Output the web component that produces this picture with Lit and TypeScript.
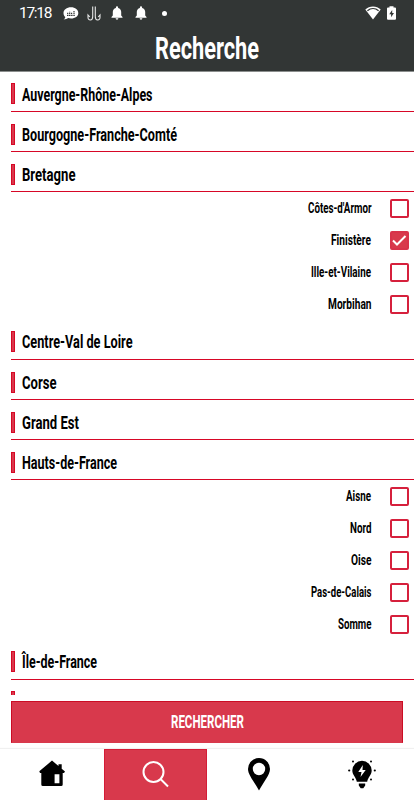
import { LitElement, html, svg, css } from "lit";
import { customElement, property } from "lit/decorators.js";

/** A single line of condensed lettering, fitted to a given width. */
@customElement("condensed-text")
class CondensedText extends LitElement {
  @property() text = "";
  @property({ type: Number }) width = 100;
  @property({ type: Number }) size = 17;
  static styles = css`
    :host { display: block; flex: none; }
    svg { display: block; overflow: visible; }
    text { font-family: Roboto, "Liberation Sans", sans-serif; font-weight: 700; fill: currentColor; }
  `;
  render() {
    const h = Math.round(this.size * 1.25);
    return html`<svg width=${this.width} height=${h}>
      <text x="0" y=${this.size} font-size=${this.size} textLength=${this.width} lengthAdjust="spacingAndGlyphs">${this.text}</text>
    </svg>`;
  }
}

type Dept = { name: string; w: number; checked?: boolean };
type Region = { name?: string; w: number; depts?: Dept[] };

const regions: Region[] = [
  { name: "Auvergne-Rhône-Alpes", w: 130.5 },
  { name: "Bourgogne-Franche-Comté", w: 155 },
  {
    name: "Bretagne", w: 53.5,
    depts: [
      { name: "Côtes-d'Armor", w: 63.5 },
      { name: "Finistère", w: 40, checked: true },
      { name: "Ille-et-Vilaine", w: 60 },
      { name: "Morbihan", w: 43.5 },
    ],
  },
  { name: "Centre-Val de Loire", w: 110.5 },
  { name: "Corse", w: 34.5 },
  { name: "Grand Est", w: 57 },
  {
    name: "Hauts-de-France", w: 95,
    depts: [
      { name: "Aisne", w: 25 },
      { name: "Nord", w: 21.5 },
      { name: "Oise", w: 20.5 },
      { name: "Pas-de-Calais", w: 60.5 },
      { name: "Somme", w: 33.5 },
    ],
  },
  { name: "Île-de-France", w: 75 },
  { w: 0 },
];

const bell = svg`<path d="M6 0.3a1.1 1.1 0 0 1 1.1 1.1v.5c2 .5 3.1 2.1 3.1 4.1v3.6l1.3 1.3v.8H.5v-.8l1.3-1.3V6c0-2 1.100-3.600 3.100-4.100v-.5A1.100 1.100 0 0 1 6 .3zM4.600 12.300h2.800a1.400 1.400 0 0 1-2.800 0z" fill="#fff"/>`;

@customElement("app-root")
class AppRoot extends LitElement {
  static styles = css`
    :host { display: flex; flex-direction: column; width: 414px; height: 800px; overflow: hidden; background: #fff; color: #000; }
    svg { display: block; flex: none; }
    header { flex: none; height: 70.5px; background: #323635; color: #fff; border-bottom: 1px solid #8b8e8d; }
    .status { display: flex; align-items: center; height: 26px; padding: 0 18px 0 19px; }
    .clock { font: 400 15.5px/27px Roboto, sans-serif; width: 44px; letter-spacing: -1.3px; white-space: nowrap; flex: none; }
    .hook { margin-left: 8px; }
    .bell-a { margin-left: 10px; }
    .bell-b { margin-left: 12px; }
    .battery { margin-left: 6px; }
    .dot { width: 5px; height: 5px; border-radius: 50%; background: #fff; margin-left: 15px; }
    .spacer { flex: 1; }
    .title { display: flex; justify-content: center; padding-top: 2px; }
    main { flex: none; height: 623.5px; overflow: hidden; }
    .region { display: flex; box-sizing: border-box; height: 39.2px; margin-left: 11px; padding-top: 11.9px; }
    .rule { height: 1px; margin-left: 11px; background: #d70726; }
    .bar { box-sizing: border-box; width: 4px; height: 21px; background: #d8394c; border: 1px solid #d70726; margin-right: 6.5px; flex: none; }
    .region condensed-text { margin-top: -0.9px; }
    .dept { box-sizing: border-box; display: flex; justify-content: flex-end; align-items: center; height: 31.85px; padding: 1.5px 5px 0 0; }
    .dept condensed-text { margin: -1px 19px 0 0; }
    .box { box-sizing: border-box; width: 19px; height: 19px; border: 2px solid #d6203c; border-radius: 2px; flex: none; }
    .box.on { background: #d8394c; border-color: #d8324a; }
    .action { flex: none; margin: 6px 11px 6px; height: 42px; box-sizing: border-box; display: flex; justify-content: center; align-items: center; background: #d8394c; border: 1px solid #cb0c24; border-bottom-color: #d8394c; color: #fff; }
    .action condensed-text { margin-top: -3px; }
    nav { flex: 1; display: grid; grid-template-columns: repeat(4, 1fr); box-shadow: 0 -1px 1px #f0f0f0; }
    .tab { display: flex; justify-content: center; align-items: flex-start; box-sizing: border-box; padding-top: 11px; }
    .tab.active { background: #d8394c; border: 1px solid #d51c37; border-bottom: 0; }
    .tab.pin { padding-top: 9px; }
  `;

  render() {
    return html`
      <header>
        <div class="status">
          <span class="clock">17:18</span>
          <svg width="16" height="13" viewBox="0 0 16 13">
            <path d="M8 .3C12.300.300 15.300 2.800 15.300 6S12.300 11.500 8 11.500c-1 0-1.900-.1-2.700-.4-1.300.9-2.800 1.400-4.700 1.400 1-.8 1.500-1.600 1.700-2.600C1.100 9 .5 7.600.5 6 .500 2.800 3.700.300 8 .300z" fill="#fff"/>
            <path d="M4 8.300h8M4.700 7V5.800M6.700 7V4.800M8.600 7V5.300M11 7V3.500" stroke="#323635" stroke-width="1.200" stroke-dasharray="1.300 .5"/>
          </svg>
          <svg class="hook" width="14" height="15" viewBox="0 0 14 15" fill="none" stroke="#e5e6e6" stroke-width="1.100">
            <path d="M5.700 .5v10c0 4.500-4.700 4.500-4.700 1V9l1.800 2M8.300 .5v10c0 4.500 4.700 4.500 4.700 1V9l-1.800 2"/>
          </svg>
          <svg class="bell-a" width="12" height="14" viewBox="0 0 12 14">${bell}</svg>
          <svg class="bell-b" width="12" height="14" viewBox="0 0 12 14">${bell}</svg>
          <span class="dot"></span>
          <span class="spacer"></span>
          <svg width="16" height="14" viewBox="0 0 16 14">
            <path d="M8 .4c3 0 5.500 1 7.700 3L8 13.600.3 3.400C2.500 1.400 5 .400 8 .400z" fill="#fff"/>
            <path d="M2.400 4.700C5.700 2 10.300 2 13.600 4.700" fill="none" stroke="#323635" stroke-width="1.300"/>
          </svg>
          <svg class="battery" width="9" height="14" viewBox="0 0 9 14">
            <path d="M2.500.300h4v1.200H8a1 1 0 0 1 1 1v10.200a1 1 0 0 1-1 1H1a1 1 0 0 1-1-1V2.500a1 1 0 0 1 1-1h1.500z" fill="#fff"/>
            <path d="M5.200 4 2.200 8.200h1.900v3l2.900-4.300H5.200z" fill="#323635"/>
          </svg>
        </div>
        <div class="title"><condensed-text text="Recherche" .width=${104} .size=${31}></condensed-text></div>
      </header>
      <main>
        ${regions.map(
          (r) => html`
            <div class="region">
              <span class="bar"></span>
              ${r.name ? html`<condensed-text .text=${r.name} .width=${r.w} .size=${17.5}></condensed-text>` : ""}
            </div>
            <div class="rule"></div>
            ${(r.depts ?? []).map(
              (d) => html`<div class="dept">
                <condensed-text .text=${d.name} .width=${d.w} .size=${14}></condensed-text>
                <span class="box ${d.checked ? "on" : ""}">
                  ${d.checked
                    ? html`<svg width="15" height="15" viewBox="0 0 15 15"><path d="M1 7.500l4 4L13.500 3" fill="none" stroke="#fff" stroke-width="2"/></svg>`
                    : ""}
                </span>
              </div>`
            )}
          `
        )}
      </main>
      <div class="action"><condensed-text text="RECHERCHER" .width=${73} .size=${17.5}></condensed-text></div>
      <nav>
        <div class="tab">
          <svg width="26" height="27" viewBox="0 0 26 27">
            <path d="M13 .6 19.500 6V4.200h3.200v4.500L26 11.500 25 13h-1.300v11.500a1.500 1.500 0 0 1-1.500 1.500H3.800a1.500 1.500 0 0 1-1.500-1.500V13H1L.3 11.300z"/>
            <path d="M15.600 14.300h4.800v9h-4.800z" fill="#fff"/>
          </svg>
        </div>
        <div class="tab active">
          <svg width="27" height="27" viewBox="0 0 27 27" fill="none" stroke="#fff" stroke-width="2">
            <circle cx="11.500" cy="11" r="10"/><path d="M18.500 18l7.500 7.500"/>
          </svg>
        </div>
        <div class="tab pin">
          <svg width="22" height="33" viewBox="0 0 22 33">
            <path fill-rule="evenodd" d="M11 0a11 11 0 0 1 11 11c0 6-6.500 13-11 21.500C6.500 24 0 17 0 11A11 11 0 0 1 11 0zm0 4.800a6.200 6.200 0 1 0 0 12.400 6.200 6.200 0 0 0 0-12.400z"/>
          </svg>
        </div>
        <div class="tab">
          <svg width="28" height="30" viewBox="0 0 28 30">
            <path d="M14 .8a9.700 9.700 0 0 1 9.700 9.700c0 4.500-3.700 6.500-4.500 11.300H8.800C8 17 4.300 15 4.300 10.500A9.700 9.700 0 0 1 14 .8zM10.800 23.500h6.400v2l-1.900 2.800h-2.600l-1.900-2.800z"/>
            <path d="M14.800 5 10.300 12h3.200l-1 5 5.200-7h-3.200z" fill="#fff"/>
            <circle cx="1.200" cy="10.500" r="1.100"/><circle cx="26.800" cy="10.500" r="1.100"/><circle cx="5" cy="1.500" r="1"/><circle cx="23" cy="1.500" r="1"/><circle cx="5" cy="19.500" r="1"/><circle cx="23" cy="19.500" r="1"/>
          </svg>
        </div>
      </nav>
    `;
  }
}
